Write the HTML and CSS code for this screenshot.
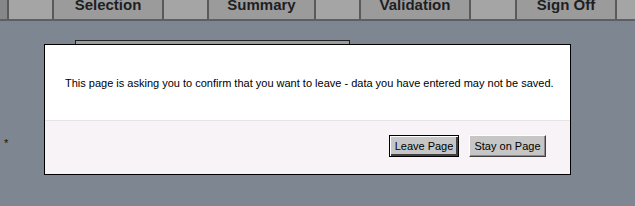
FILE: index.html
```html
<!DOCTYPE html>
<html>
<head>
<meta charset="utf-8">
<link rel="stylesheet" href="styles.css">
</head>
<body>
<div class="tabs">
  <div class="cell edge"></div>
  <div class="cell gap"></div>
  <div class="cell tab">Selection</div>
  <div class="cell gap"></div>
  <div class="cell tab w107">Summary</div>
  <div class="cell gap"></div>
  <div class="cell tab">Validation</div>
  <div class="cell gap w46"></div>
  <div class="cell tab w100">Sign Off</div>
  <div class="cell gap last"></div>
</div>
<div class="content">
  <div class="panel"></div>
  <div class="note">*</div>
</div>
<div class="dialog">
  <div class="msg">This page is asking you to confirm that you want to leave - data you have entered may not be saved.</div>
  <div class="foot">
    <button class="btn default">Leave Page</button>
    <button class="btn stay">Stay on Page</button>
  </div>
</div>
</body>
</html>
```
FILE: styles.css
```css
html, body { margin: 0; padding: 0; }
body {
  width: 635px;
  height: 206px;
  overflow: hidden;
  background: #7e8791;
  font-family: "Liberation Sans", Arial, sans-serif;
  position: relative;
}
.tabs {
  display: flex;
  height: 19px;
  border-bottom: 2px solid #5b6068;
  overflow: hidden;
}
.cell {
  box-sizing: border-box;
  height: 19px;
  border-right: 2px solid #5a5a5c;
  flex: none;
}
.edge { width: 9px; background: #868788; }
.gap { width: 45px; background: #a5a5a6; }
.w46 { width: 46px; }
.last { flex: 1; border-right: none; }
.tab {
  width: 110px;
  background: #9b9b9c;
  color: #1e1f22;
  font-weight: bold;
  font-size: 15px;
  line-height: 10px;
  text-align: center;
}
.w107 { width: 107px; }
.w100 { width: 100px; }
.content { padding-top: 19px; }
.panel {
  margin-left: 75px;
  width: 275px;
  height: 90px;
  box-sizing: border-box;
  border: 1px solid #222;
  background: #9b9c9d;
}
.note {
  margin-top: 7px;
  margin-left: 4px;
  font-size: 11px;
  line-height: 12px;
  color: #111;
}
.dialog {
  position: absolute;
  left: 44px;
  top: 44px;
  width: 527px;
  height: 131px;
  box-sizing: border-box;
  border: 1px solid #000;
  background: #f7f3f7;
  display: flex;
  flex-direction: column;
}
.msg {
  height: 76px;
  box-sizing: border-box;
  background: #fff;
  border-bottom: 1px solid #e7e3e7;
  padding: 32px 0 0 20px;
  font-size: 11px;
  line-height: 13px;
  color: #000;
}
.foot {
  flex: 1;
  display: flex;
  justify-content: flex-end;
  align-items: flex-start;
  gap: 10px;
  padding: 14px 24px 0 0;
}
.btn {
  font-family: "Liberation Sans", Arial, sans-serif;
  font-size: 11px;
  color: #000;
  background: #c6c6c6;
  height: 22px;
  width: 77px;
  padding: 0;
  margin: 0;
  border: 1px solid;
  border-color: #fff #404040 #404040 #fff;
  box-shadow: inset -1px -1px 0 #8a8a8a;
  box-sizing: border-box;
}
.btn.default {
  width: 70px;
  border: 1px solid #000;
  box-shadow: inset 1px 1px 0 #fff, inset -2px -2px 0 #404040;
}
```
